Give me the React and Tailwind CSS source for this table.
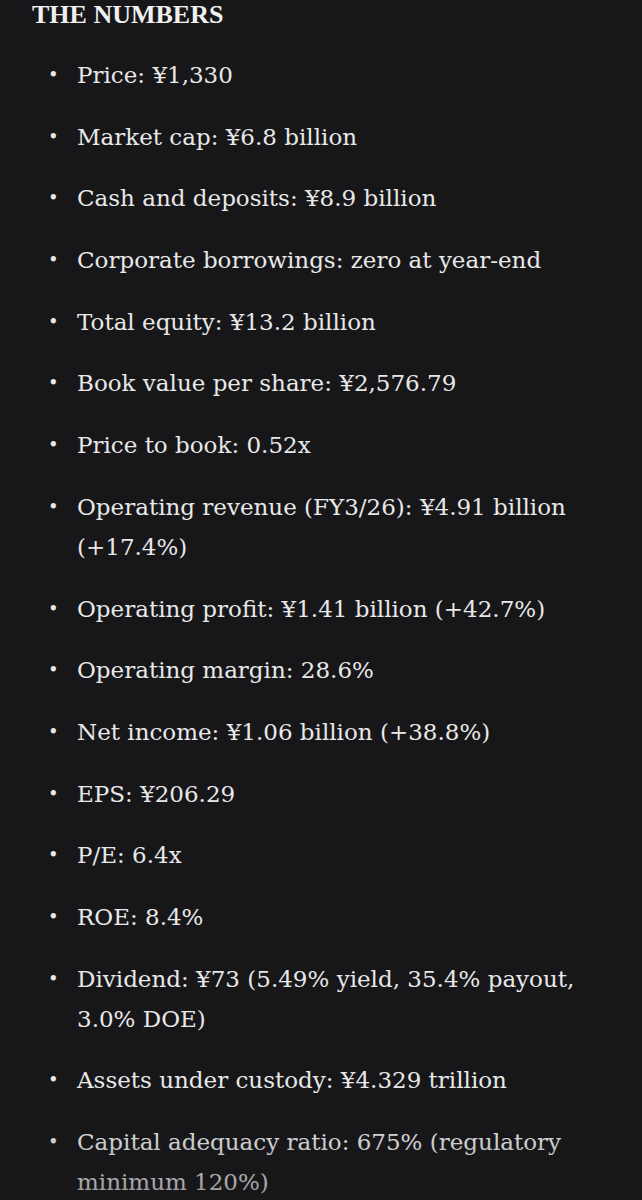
export default function App() {
  const items = [
    "Price: ¥1,330",
    "Market cap: ¥6.8 billion",
    "Cash and deposits: ¥8.9 billion",
    "Corporate borrowings: zero at year-end",
    "Total equity: ¥13.2 billion",
    "Book value per share: ¥2,576.79",
    "Price to book: 0.52x",
    "Operating revenue (FY3/26): ¥4.91 billion (+17.4%)",
    "Operating profit: ¥1.41 billion (+42.7%)",
    "Operating margin: 28.6%",
    "Net income: ¥1.06 billion (+38.8%)",
    "EPS: ¥206.29",
    "P/E: 6.4x",
    "ROE: 8.4%",
    "Dividend: ¥73 (5.49% yield, 35.4% payout, 3.0% DOE)",
    "Assets under custody: ¥4.329 trillion",
    "Capital adequacy ratio: 675% (regulatory minimum 120%)",
  ];
  return (
    <div className="relative h-[1200px] w-[642px] overflow-hidden bg-[#17171a] text-[#e8e8e8]">
      <h2 className="pl-[32px] pt-0 font-['Liberation_Serif',serif] text-[26px] font-bold leading-[30px] text-[#f0f0f0]">
        THE NUMBERS
      </h2>
      <ul className="mt-[25px] flex flex-col gap-[21.7px] pr-[20px] font-['DejaVu_Serif',serif] text-[23px] leading-[40px]">
        {items.map((t) => (
          <li key={t} className="flex">
            <span className="w-[77px] shrink-0 pl-[48px] text-[18px]">•</span>
            <span>{t}</span>
          </li>
        ))}
      </ul>
      <div className="pointer-events-none absolute bottom-0 left-0 h-[85px] w-full bg-gradient-to-b from-transparent to-[#17171a]/40" />
    </div>
  );
}
